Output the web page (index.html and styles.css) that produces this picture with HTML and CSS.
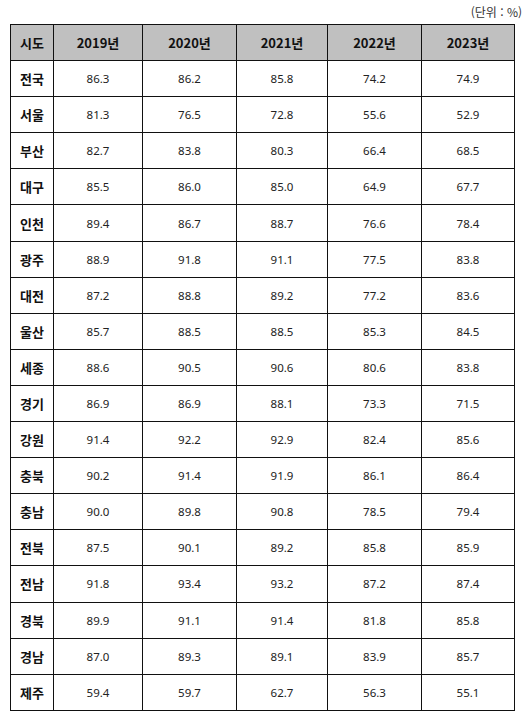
FILE: index.html
```html
<!DOCTYPE html>
<html lang="ko">
<head>
<meta charset="utf-8">
<link rel="stylesheet" href="styles.css">
</head>
<body>
<div class="page">
  <div class="unit">(단위 : %)</div>
  <table class="stats">
    <colgroup>
      <col class="c0"><col class="c1"><col class="c2"><col class="c3"><col class="c4"><col class="c5">
    </colgroup>
    <thead>
      <tr><th>시도</th><th>2019년</th><th>2020년</th><th>2021년</th><th>2022년</th><th>2023년</th></tr>
    </thead>
    <tbody>
      <tr><th>전국</th><td>86.3</td><td>86.2</td><td>85.8</td><td>74.2</td><td>74.9</td></tr>
      <tr><th>서울</th><td>81.3</td><td>76.5</td><td>72.8</td><td>55.6</td><td>52.9</td></tr>
      <tr><th>부산</th><td>82.7</td><td>83.8</td><td>80.3</td><td>66.4</td><td>68.5</td></tr>
      <tr><th>대구</th><td>85.5</td><td>86.0</td><td>85.0</td><td>64.9</td><td>67.7</td></tr>
      <tr><th>인천</th><td>89.4</td><td>86.7</td><td>88.7</td><td>76.6</td><td>78.4</td></tr>
      <tr><th>광주</th><td>88.9</td><td>91.8</td><td>91.1</td><td>77.5</td><td>83.8</td></tr>
      <tr><th>대전</th><td>87.2</td><td>88.8</td><td>89.2</td><td>77.2</td><td>83.6</td></tr>
      <tr><th>울산</th><td>85.7</td><td>88.5</td><td>88.5</td><td>85.3</td><td>84.5</td></tr>
      <tr><th>세종</th><td>88.6</td><td>90.5</td><td>90.6</td><td>80.6</td><td>83.8</td></tr>
      <tr><th>경기</th><td>86.9</td><td>86.9</td><td>88.1</td><td>73.3</td><td>71.5</td></tr>
      <tr><th>강원</th><td>91.4</td><td>92.2</td><td>92.9</td><td>82.4</td><td>85.6</td></tr>
      <tr><th>충북</th><td>90.2</td><td>91.4</td><td>91.9</td><td>86.1</td><td>86.4</td></tr>
      <tr><th>충남</th><td>90.0</td><td>89.8</td><td>90.8</td><td>78.5</td><td>79.4</td></tr>
      <tr><th>전북</th><td>87.5</td><td>90.1</td><td>89.2</td><td>85.8</td><td>85.9</td></tr>
      <tr><th>전남</th><td>91.8</td><td>93.4</td><td>93.2</td><td>87.2</td><td>87.4</td></tr>
      <tr><th>경북</th><td>89.9</td><td>91.1</td><td>91.4</td><td>81.8</td><td>85.8</td></tr>
      <tr><th>경남</th><td>87.0</td><td>89.3</td><td>89.1</td><td>83.9</td><td>85.7</td></tr>
      <tr><th>제주</th><td>59.4</td><td>59.7</td><td>62.7</td><td>56.3</td><td>55.1</td></tr>
    </tbody>
  </table>
</div>
</body>
</html>
```

FILE: styles.css
```css
html, body {
  margin: 0;
  padding: 0;
  background: #ffffff;
}
body {
  font-family: "Noto Sans", "Noto Sans CJK KR", sans-serif;
  color: #1a1a1a;
}
.page {
  width: 525px;
  padding: 4px 0 0 10px;
  box-sizing: border-box;
}
.unit {
  width: 512px;
  text-align: right;
  font-size: 12px;
  line-height: 16px;
  height: 20px;
  color: #333;
  font-family: "Noto Sans CJK KR", sans-serif;
}
.stats {
  border-collapse: collapse;
  table-layout: fixed;
  width: 504px;
  font-size: 12px;
}
.c0 { width: 43px; }
.c1 { width: 89px; }
.c2 { width: 94px; }
.c3 { width: 91px; }
.c4 { width: 94px; }
.c5 { width: 93px; }
.stats tr {
  height: 36.1px;
}
.stats th, .stats td {
  border: 1px solid #111;
  text-align: center;
  vertical-align: middle;
  padding: 0;
}
.stats th {
  font-family: "Noto Sans CJK KR", sans-serif;
  font-weight: 700;
  font-size: 13px;
  color: #111;
}
.stats thead th {
  background: #c0c0c0;
}
.stats td {
  font-weight: 400;
  font-size: 11.5px;
  color: #222;
}
```
